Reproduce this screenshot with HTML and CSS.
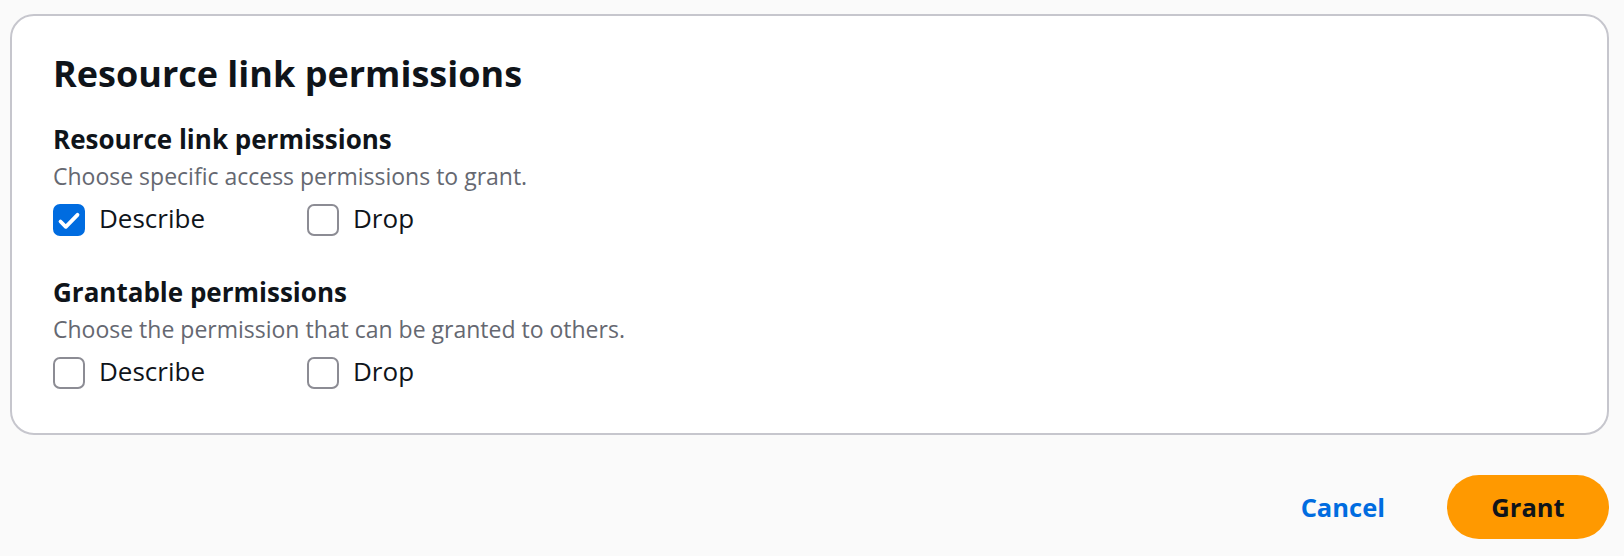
FILE: index.html
```html
<!DOCTYPE html>
<html lang="en">
<head>
  <meta charset="UTF-8">
  <title>Resource link permissions</title>
  <link rel="stylesheet" href="styles.css">
</head>
<body>
  <div class="container">
    <h2 class="container-title">Resource link permissions</h2>

    <div class="field">
      <div class="field-label">Resource link permissions</div>
      <div class="field-desc">Choose specific access permissions to grant.</div>
      <div class="checks">
        <label class="check">
          <span class="box checked"><svg viewBox="0 0 32 32"><polyline points="7.5,17.5 12.8,22.8 24.5,10.8"/></svg></span>
          <span class="check-text">Describe</span>
        </label>
        <label class="check">
          <span class="box"></span>
          <span class="check-text">Drop</span>
        </label>
      </div>
    </div>

    <div class="field">
      <div class="field-label">Grantable permissions</div>
      <div class="field-desc">Choose the permission that can be granted to others.</div>
      <div class="checks">
        <label class="check">
          <span class="box"></span>
          <span class="check-text">Describe</span>
        </label>
        <label class="check">
          <span class="box"></span>
          <span class="check-text">Drop</span>
        </label>
      </div>
    </div>
  </div>

  <div class="actions">
    <a class="link-btn" href="#">Cancel</a>
    <button class="primary-btn">Grant</button>
  </div>
</body>
</html>
```

FILE: styles.css
```css
body {
  margin: 0;
  background: #fafafa;
  font-family: "Open Sans", "Noto Sans", sans-serif;
  color: #0f141a;
}

.container {
  margin: 14px 15px 0 10px;
  background: #fff;
  border: 2px solid #c6c6cd;
  border-radius: 24px;
  padding: 36px 41px 44px;
}

.container-title {
  margin: 0 0 25px;
  font-size: 36px;
  line-height: 44px;
  font-weight: 700;
}

.field { margin-bottom: 38px; }
.field:last-child { margin-bottom: 0; }

.field-label {
  font-size: 26px;
  font-weight: 700;
  line-height: 36px;
}

.field-desc {
  margin-top: 3px;
  font-size: 23px;
  line-height: 32px;
  color: #656871;
}

.checks {
  display: flex;
  margin-top: 12px;
}

.check {
  display: flex;
  align-items: center;
  gap: 14px;
  width: 254px;
  height: 32px;
  font-size: 26px;
  line-height: 32px;
}

.check-text { padding-bottom: 4px; }

.box {
  width: 32px;
  height: 32px;
  flex: none;
  box-sizing: border-box;
  border: 2px solid #8c8c94;
  border-radius: 7px;
  background: #fff;
}

.box.checked {
  background: #006ce0;
  border-color: #006ce0;
}

.box svg {
  display: block;
  width: 32px;
  height: 32px;
  margin: -2px;
}

.box polyline {
  fill: none;
  stroke: #fff;
  stroke-width: 3.8;
  stroke-linecap: round;
  stroke-linejoin: round;
}

.actions {
  display: flex;
  justify-content: flex-end;
  align-items: center;
  gap: 62px;
  margin: 40px 15px 0 0;
}

.link-btn {
  color: #006ce0;
  font-weight: 700;
  font-size: 25.5px;
  text-decoration: none;
}

.primary-btn {
  width: 162px;
  height: 64px;
  border: none;
  border-radius: 32px;
  background: #ff9900;
  color: #0f141a;
  font-family: inherit;
  font-size: 25.5px;
  font-weight: 700;
}
```
